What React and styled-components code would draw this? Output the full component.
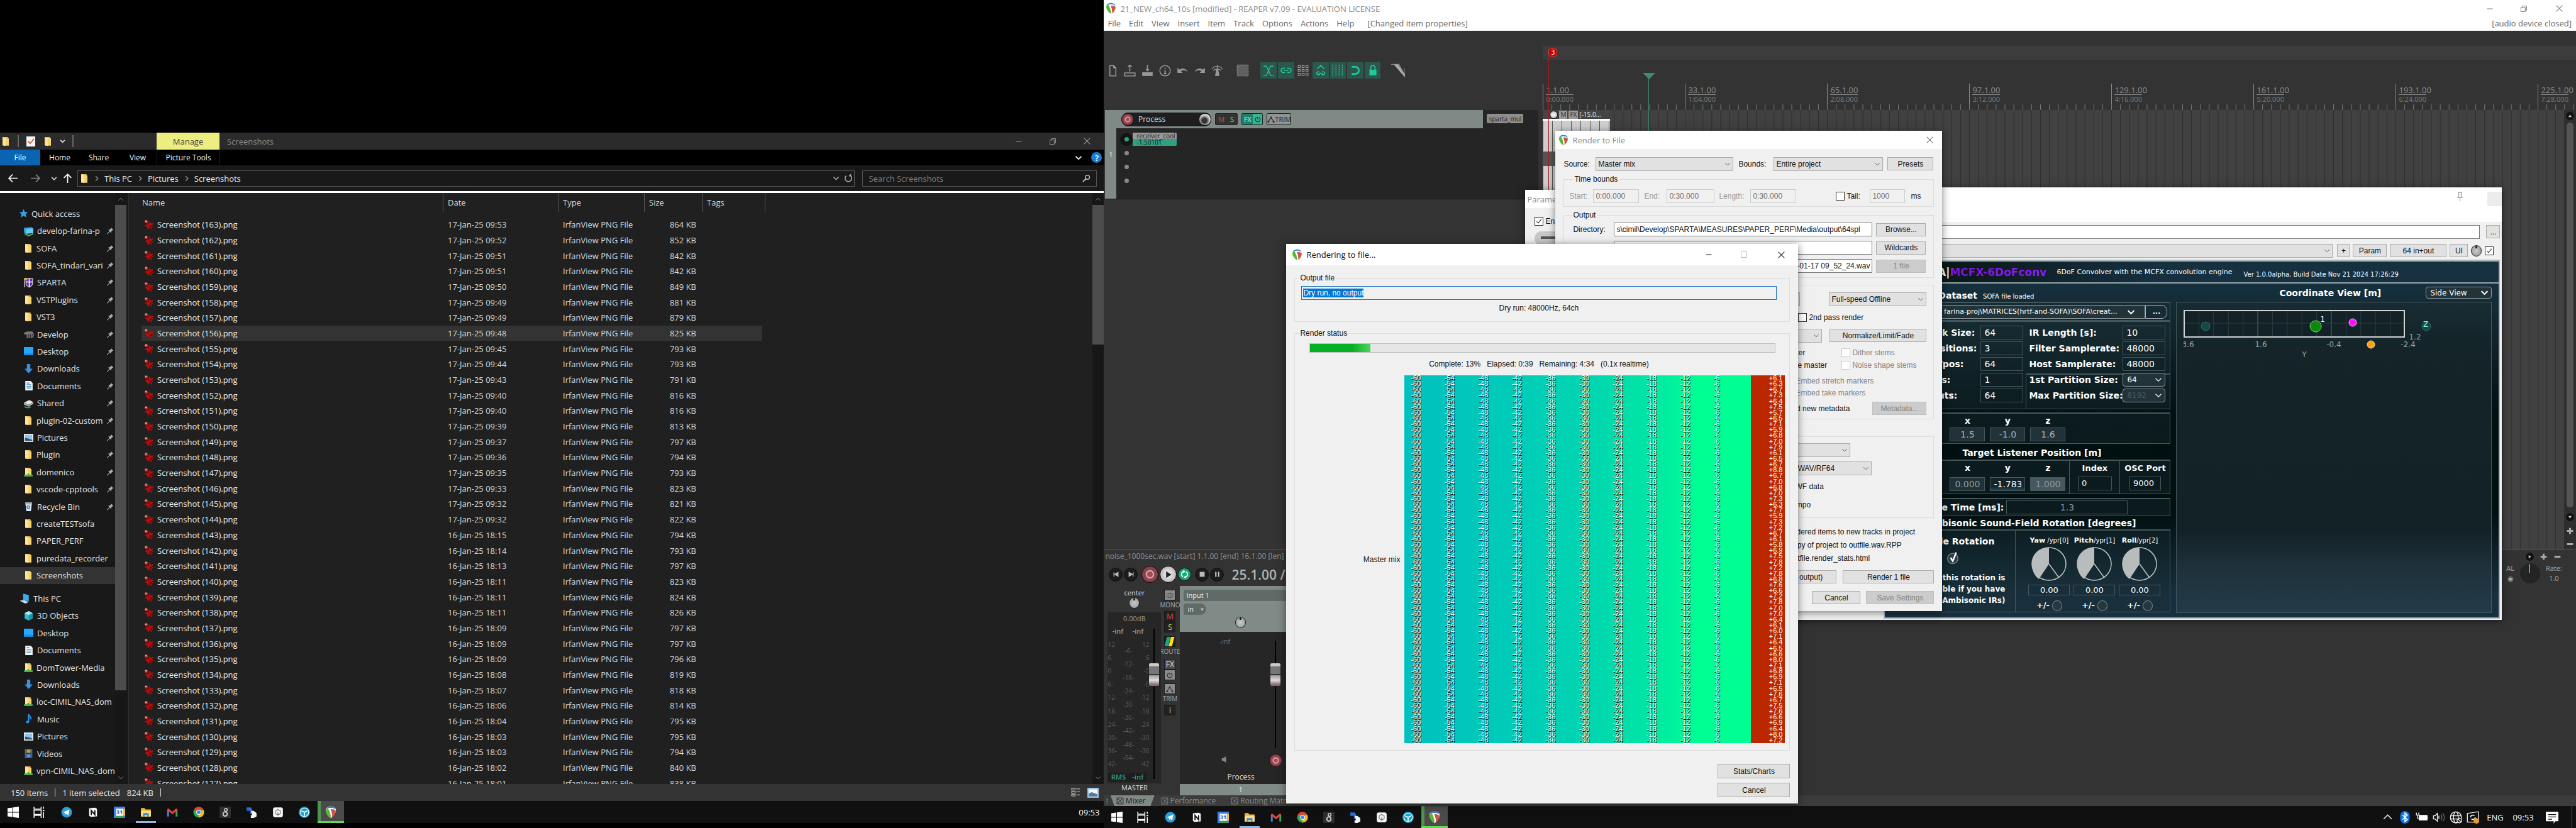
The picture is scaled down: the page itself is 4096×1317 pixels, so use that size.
import React, { useEffect, useRef } from "react";
import styled, { createGlobalStyle, css } from "styled-components";

const UI = '"Open Sans", "Noto Sans", sans-serif';
const MS = '"Liberation Sans", Arial, sans-serif';
const VD = '"DejaVu Sans", Verdana, sans-serif';

const Global = createGlobalStyle`
  *, *::before, *::after { box-sizing: border-box; }
  body { margin: 0; background: #000; font: 13px/16px ${UI}; color: #e6e6e6; overflow: hidden; }
  button, input, select { font: inherit; color: inherit; margin: 0; padding: 0; border: 0; background: none; border-radius: 0; outline: none; }
  fieldset { min-width: 0; margin: 0; }
  svg { display: block; flex: none; }
`;

const Screen = styled.div`
  display: grid; grid-template-columns: 3fr 4fr; grid-template-rows: minmax(0, 1fr); height: 100vh; white-space: nowrap;
`;

/* ───────────── icons ───────────── */
const Svg = ({ s = 17, w, h, vb = "0 0 16 16", children, ...p }) => (
  <svg width={w || s} height={h || s} viewBox={vb} fill="none" aria-hidden="true" {...p}>{children}</svg>
);
const ReaperLogo = ({ s = 18 }) => (
  <Svg s={s}>
    <path d="M8 .5c3 0 6.500 1.500 6.500 4.500 0 4-3 8-6.500 10.500C4.500 13 1.500 9 1.500 5 1.500 2 5 .5 8 .5z" fill="#fff" />
    <path d="M2 4.500C2.400 2 5 .7 8 .7s5.600 1.300 6 3.800C12 2.800 10 2.400 8 2.400S4 2.800 2 4.500z" fill="#2e86c4" />
    <path d="M1.600 5c.8-.9 1.900-1.600 3-1.900 1.800 3 3.400 7 3.600 12.300C4.600 13.100 1.500 9 1.600 5z" fill="#58b82e" />
    <path d="M7 4.200c2.200-.6 5-.1 7.300 1.600-.1 3.500-2.300 6.800-4.800 9C9.700 10.600 9 7 7 4.200z" fill="#cf5450" />
    <path d="M5 3.300c2-.6 3.500-.5 5 .2-1.200.1-1.900.4-2.400.9 1.600 3.200 2 6 1.800 10-.6-4.600-2-8-4.400-11.100z" fill="#fff" />
  </Svg>
);
const Folder = ({ s = 16, badge }) => (
  <Svg s={s}>
    <path d="M3 1h8.500v2H13v11.500H3z" fill="#e9bd52" /><path d="M3 1.300 8 2.500v12.800l-5-1.200z" fill="#fbe39a" />
    <path d="M8 3h5v11.500H8z" fill="#f5d272" />
    {badge && <path d="M1 13.500h14M8 10v4" stroke="#3bb143" strokeWidth="2.500" />}
  </Svg>
);
const Net = () => (<Svg><path d="M1 3l11-1 3 2v7l-11 1-3-2z" fill="#2d9fe0" /><path d="M4 5l11-1v7l-11 1z" fill="#6cc6f2" /><path d="M2 12l6 3 7-3" stroke="#4bb04f" strokeWidth="2" /></Svg>);
const Shield = () => (<Svg><path d="M4 2h10v7c0 3-3 5-5 6-2-1-5-3-5-6z" fill="#5a2db4" stroke="#ddd" /><path d="M9 2v12M4 7h10" stroke="#fff" strokeWidth="1.500" /><path d="M1 1h5v3H1z" fill="#d8b13a" /><path d="M2 4v11" stroke="#999" strokeWidth="2" /></Svg>);
const Horse = () => (<Svg><path d="M1 7l5-2h7l2 3-1 5M6 8v6M9 8v6M12 8v6M2 8l3-1h8" stroke="#7d7d7d" strokeWidth="1.800" /></Svg>);
const Desk = () => (<Svg><path d="M1 2h14v12H1z" fill="#1b8ee6" /><path d="M1 2h14v9H1z" fill="#27a8ff" /></Svg>);
const Down = () => (<Svg><path d="M5.500 1h5v7H14l-6 7-6-7h3.500z" fill="#3a92de" /></Svg>);
const Doc = () => (<Svg><path d="M3 1h8l3 3v11H3z" fill="#f3f6f8" /><path d="M5 4h4M5 6.500h7M5 9h7M5 11.500h7" stroke="#4a90c8" strokeWidth="1.200" /></Svg>);
const Share = () => (<Svg><path d="M1 7l8-4 6 3-7 4z" fill="#e6e6e6" /><path d="M1 7l7 3v3l-7-3zM8 10l7-4v3l-7 4z" fill="#a6a6a6" /><path d="M2 13c3 2 6 2 9 0" stroke="#47a24b" strokeWidth="2" /></Svg>);
const Pic = () => (<Svg><path d="M1 2h14v12H1z" fill="#f5f5f5" /><path d="M2.500 3.500h11v9h-11z" fill="#8ec6ee" /><path d="M2.500 8l5 1 6 2v1.500h-11z" fill="#33546e" /></Svg>);
const Bin = () => (<Svg><path d="M3 2h10l-1.500 13h-7z" fill="#dfe7ec" /><path d="M3 2h10l-.4 3H3.400z" fill="#9fb3c0" /><circle cx="7.500" cy="9" r="2" stroke="#2f86d4" strokeWidth="1.500" /></Svg>);
const Pc = () => (<Svg s={18}><path d="M6 1l8 2v9l-8-2z" fill="#3fa9ea" /><path d="M1 11l6-1 7 3-5 2z" fill="#cfd8de" /></Svg>);
const Cube = () => (<Svg><path d="M8 1l6 3v8l-6 3-6-3V4z" fill="#35bcd0" /><path d="M8 1l6 3-6 3-6-3z" fill="#a7ecf3" /><path d="M8 7l6-3v8l-6 3z" fill="#1a97ac" /></Svg>);
const Note = () => (<Svg><path d="M8 1v10.500" stroke="#1f9bf0" strokeWidth="2" /><path d="M8 1c.5 3 4 3.500 3.500 7.500" stroke="#1f9bf0" strokeWidth="1.800" /><ellipse cx="6.500" cy="12.500" rx="2.500" ry="2" fill="#1f9bf0" /></Svg>);
const Film = () => (<Svg><path d="M2 1h12v14H2z" fill="#2b3b55" /><path d="M5 2h6v5H5z" fill="#a7a44c" /><path d="M5 9h6v5H5z" fill="#5e8fd8" /><path d="M3.500 1v14M12.500 1v14" stroke="#9aa" strokeDasharray="1 1" /></Svg>);
const Star = () => (<Svg s={15}><path d="M8 .5l2.100 5 5.400.4-4.100 3.500 1.300 5.300L8 11.900l-4.700 2.800 1.300-5.300L.5 5.900l5.400-.4z" fill="#2ea3ee" /></Svg>);
const Pin = () => (<Svg s={12}><path d="M10 1l5 5-1.500.5-3 3-.3 3.200-2.700-2.600L2 15.500l-.8-.8L6.700 9 4 6l3.300-.3 3-3z" fill="#a9b0b5" /></Svg>);
const Splat = () => (
  <Svg s={17}>
    <path d="M9 2l1.500 3.500L15 5l-2 3.500L15.500 10l-3.300 1 .3 4-3.500-2.500L6.500 15l-.8-4L2 9.500 5 7 4 3l3.500 1.500z" fill="#b80c0c" />
    <path d="M9 2l-1 6-3-1zM9 13l1-5 4 2z" fill="#7a0606" /><circle cx="4.200" cy="3.200" r="2.400" fill="#a33" /><circle cx="3.800" cy="2.800" r="1.100" fill="#e8b8b8" />
  </Svg>
);
const Chev = ({ s = 10, d = "down", c = "currentColor", sw = 1.5 }) => {
  const p = { down: "M2 5l6 6 6-6", up: "M2 11l6-6 6 6", right: "M5 2l6 6-6 6" }[d];
  return <Svg s={s}><path d={p} stroke={c} strokeWidth={sw} /></Svg>;
};
const Arrow = ({ r = 0, c = "#fff" }) => (<Svg s={17}><path transform={`rotate(${r} 8 8)`} d="M15 8H2M7.500 2.500 2 8l5.500 5.500" stroke={c} strokeWidth="1.600" /></Svg>);
const MinI = ({ c }) => <Svg s={12}><path d="M2 8h12" stroke={c} strokeWidth="1.300" /></Svg>;
const MaxI = ({ c }) => <Svg s={12}><path d="M2 2h12v12H2z" stroke={c} strokeWidth="1.300" /></Svg>;
const RestI = ({ c }) => <Svg s={12}><path d="M2 5h9v9H2zM5 5V2h9v9h-3" stroke={c} strokeWidth="1.300" /></Svg>;
const XI = ({ c }) => <Svg s={13}><path d="M2 2l12 12M14 2L2 14" stroke={c} strokeWidth="1.300" /></Svg>;

/* ───────────── taskbar ───────────── */
const Bar = styled.nav`
  display: flex; align-items: stretch; height: 35px; background: #101010; flex: none; color: #fff;
`;
const TaskBtn = styled.button`
  display: flex; align-items: center; justify-content: center; width: 42px; padding-bottom: 3px; border-top: 3px solid transparent;
  ${(p) => p.$sys && css`width: 41px;`}
  ${(p) => p.$open && css`background: linear-gradient(#8fb8dc, #8fb8dc) center bottom / 32px 3px no-repeat;`}
  ${(p) => p.$active && css`background: linear-gradient(90deg, #4f944f 5px, #4b4b4b 5px); box-shadow: inset 0 -3px #5fd854; border: 0; padding-bottom: 0;`}
`;
const Gap = styled.span`width: ${(p) => p.$w}px; flex: none;`;
const Fill = styled.span`flex: 1;`;
const taskIcons = [
  ["Start", <Svg s={18}><path d="M0 2.300 7 1.300v6.200H0zM8 1.200 16 0v7.500H8zM0 8.500h7v6.200l-7-1zM8 8.500h8V16l-8-1.200z" fill="#fff" /></Svg>],
  ["Task view", <Svg s={18}><path d="M1 0v3.500h10V0M1 16v-3.500h10V16M1 5h10v6H1zM14.500 0v3M14.500 8v8" stroke="#fff" strokeWidth="1.300" /><path d="M13.500 4.500h2v2h-2z" fill="#fff" /></Svg>],
  ["Telegram", <Svg s={18}><circle cx="8" cy="8" r="7.500" fill="#2a9fd8" /><path d="M3 8l9-4-1.500 8.500L7.500 10 6.500 12l-.5-3z" fill="#fff" /></Svg>],
  ["Notion", <Svg s={18}><path d="M2 2l9-1 3 2v11l-9 1-3-2z" fill="#fff" stroke="#222" /><path d="M5.500 12V5.500l5 6V5" stroke="#111" strokeWidth="1.700" /></Svg>],
  ["Calendar", <Svg s={18}><path d="M0 0h16v16H0z" fill="#3f7de8" /><path d="M13 3h3v10h-3z" fill="#f9bc15" /><path d="M3 13h10v3H3z" fill="#32a350" /><path d="M3 3h10v10H3z" fill="#fff" /><text x="8" y="10.800" fontSize="8" fontWeight="700" textAnchor="middle" fill="#2a66d0">31</text></Svg>],
  ["File Explorer", <Svg s={18}><path d="M1 2h5l1.500 2H15v10H1z" fill="#f0b93a" /><path d="M1 6h14v8H1z" fill="#ffdd80" /><path d="M4 9h8v5h-2v-2H6v2H4z" fill="#3a8bd4" /></Svg>],
  ["Gmail", <Svg s={18}><path d="M2 14V4" stroke="#4285f4" strokeWidth="2.600" /><path d="M14 14V4" stroke="#34a853" strokeWidth="2.600" /><path d="M1.500 3.500 8 9l6.500-5.500" stroke="#ea4335" strokeWidth="2.800" /></Svg>],
  ["Chrome", <Svg s={18}><circle cx="8" cy="8" r="7.500" fill="#33a852" /><path d="M8 8 1.500 4.200A7.500 7.500 0 0 1 14.500 4.300H8z" fill="#ea4335" /><path d="M8 8l6.500-3.700A7.500 7.500 0 0 1 8 15.500z" fill="#fbbc05" /><circle cx="8" cy="8" r="3.500" fill="#fff" /><circle cx="8" cy="8" r="2.700" fill="#4285f4" /></Svg>],
  ["Music notes", <Svg s={18}><path d="M0 0h16v16H0z" fill="#2e2e2e" /><circle cx="8" cy="10.500" r="3" stroke="#d8d8d8" strokeWidth="1.600" /><circle cx="9" cy="4.500" r="2" stroke="#d8d8d8" strokeWidth="1.300" /></Svg>],
  ["Sync", <Svg s={18}><path d="M1 1h6l2 3v6H6V6H1z" fill="#2b6bd8" /><path d="M7 6h4l4 3v5l-4 2H7V12h2z" fill="#f2f6fb" /></Svg>],
  ["Model", <Svg s={18}><rect x="1" y="1" width="14" height="14" rx="3" fill="#f4f4f4" /><path d="M8 4l3.500 2v4L8 12l-3.500-2V6zM8 8v4" stroke="#777" /></Svg>],
  ["Chat", <Svg s={18}><circle cx="8" cy="8" r="8" fill="#1ba0c8" /><circle cx="8" cy="8" r="6" stroke="#fff" /><path d="M8 8 4 6M8 8l4-2M8 8v5" stroke="#fff" strokeWidth="1.500" /></Svg>],
  ["REAPER", <ReaperLogo s={20} />],
];
const TaskButtons = () => taskIcons.map(([n, ic], i) => (
  <React.Fragment key={n}>
    <TaskBtn aria-label={n} $sys={i < 2} $open={n === "File Explorer"} $active={n === "REAPER"}>{ic}</TaskBtn>
    {i === 1 && <Gap $w={3} />}
  </React.Fragment>
));
const Tray = styled.div`
  display: grid; grid-template-columns: repeat(6, 27px) 45px 44px 48px 14px; align-items: center; justify-items: center;
`;
const DeskEdge = styled.span`width: 1px; height: 35px; background: #555;`;
const Clock = styled.time`align-self: center; margin-right: 7px;`;

/* ───────────── explorer ───────────── */
const LeftMonitor = styled.div`display: flex; flex-direction: column; min-width: 0; padding: 211px 0 8px; background: #000;`;
const Explorer = styled.section`flex: 1; min-height: 0; display: flex; flex-direction: column; background: #202020;`;
const ETitle = styled.header`display: flex; align-items: center; height: 27px; background: #2b2b2b; color: #8c8c8c; flex: none;`;
const Quick = styled.div`display: flex; align-items: center; gap: 11px; width: 249px; padding-left: 1px; color: #ddd;`;
const Tick = styled.i`width: 2px; height: 19px; border: solid #666; border-width: 0 1px; `;
const Manage = styled.button`width: 100px; height: 27px; background: #eded80; color: #444; margin-right: 12px;`;
const WinBtn = styled.button`display: grid; place-items: center; width: ${(p) => p.$w || 54}px; height: 100%;`;
const Ribbon = styled.div`display: flex; align-items: center; height: 25px; background: #000; color: #eee; flex: none; padding-right: 3px;`;
const Tab = styled.button`
  height: 25px; width: ${(p) => p.$w || 62}px; font-size: 12px; text-align: center;
  ${(p) => p.$file && css`background: #0a63b3; color: #fff;`}
  ${(p) => p.$edge && css`border: solid #222; border-width: 0 1px; margin-left: -1px;`}
`;
const Help = styled.button`width: 17px; height: 17px; border-radius: 50%; background: #1580d8; color: #fff; font-weight: 600; line-height: 16px; margin-left: 14px;`;
const AddressRow = styled.div`
  display: flex; align-items: center; height: 44px; background: #191919; border-bottom: 3px solid #fff; padding: 0 11px 0 12px; flex: none;
`;
const NavBtns = styled.div`display: grid; grid-template-columns: 36px 33px 18px 24px; align-items: center; `;
const NavBtn = styled.button`display: flex; padding: 0;`;
const Crumbs = styled.div`
  flex: 1; display: flex; align-items: center; gap: 7px; height: 26px; border: 1px solid #535353; padding: 0 2px; margin-right: 12px;
`;
const Crumb = styled.a`color: #eee; text-decoration: none; margin-right: 1px;`;
const Search = styled.label`
  display: flex; align-items: center; width: 373px; height: 26px; border: 1px solid #535353; padding: 0 9px; color: #ccc;
  input { flex: 1; } input::placeholder { color: #7d7d7d; }
`;
const EBody = styled.div`flex: 1; min-height: 0; display: flex;`;
const Side = styled.aside`width: 183px; background: #191919; padding-top: 19px; overflow: hidden; flex: none;`;
const SideList = styled.ul`
  display: grid; grid-auto-rows: 1fr; height: ${(p) => p.$h}px; margin: 0 0 9px; padding: 0; list-style: none;
`;
const SideItem = styled.li`
  display: flex; align-items: center; gap: 5px; padding-left: ${(p) => (p.$top ? 30 : 37)}px; padding-right: 5px; margin-right: 2px;
  ${(p) => p.$on && css`background: #333;`}
  span { flex: 1; overflow: hidden; }
`;
const VScroll = styled.div`
  width: ${(p) => p.$w}px; flex: none; display: flex; flex-direction: column; align-items: center; justify-content: space-between; background: #171717; color: #888; padding: 5px 0;
`;
const VThumb = styled.span`width: 100%; height: ${(p) => p.$h}px; background: #4d4d4d; margin: 4px 0 auto;`;
const List = styled.div`flex: 1; min-width: 0; overflow: hidden; border-left: 3px solid #191919; box-shadow: inset 1px 0 #333; padding-left: 21px;`;
const Files = styled.table`
  display: block; width: 993px; border-spacing: 0;
  thead { display: block; }
  tr { display: grid; grid-template-columns: 480px 183px 137px 92px 100px; align-items: center; }
  thead tr { height: 30px; }
  th { font-weight: 400; text-align: left; padding: 0 0 0 7px; height: 30px; line-height: 30px; border-right: 1px solid #5c5c5c; color: #d8d8d8; }
  th:first-child { padding-left: 1px; }
  tbody { display: grid; grid-auto-rows: 1fr; height: 913px; margin-top: 8px; }
  td { padding: 0 0 0 7px; color: #dadada; }
  td:first-child { padding-left: 3px; color: #ececec; }
  td:nth-child(4) { text-align: right; padding-right: 10px; }
`;
const FileRow = styled.tr`
  width: 987px;
  ${(p) => p.$on && css`background: #333;`}
`;
const FileName = styled.div`display: flex; align-items: center; gap: 5px;`;
const Status = styled.footer`display: flex; align-items: center; gap: 11px; height: 27px; background: #333; padding: 0 8px 0 17px; flex: none;`;
const Sep = styled.i`width: 1px; height: 13px; background: #ddd;`;

const dates = ["17-Jan-25 09:53", "17-Jan-25 09:52", "17-Jan-25 09:51", "17-Jan-25 09:51", "17-Jan-25 09:50", "17-Jan-25 09:49", "17-Jan-25 09:49", "17-Jan-25 09:48", "17-Jan-25 09:45", "17-Jan-25 09:44", "17-Jan-25 09:43", "17-Jan-25 09:40", "17-Jan-25 09:40", "17-Jan-25 09:39", "17-Jan-25 09:37", "17-Jan-25 09:36", "17-Jan-25 09:35", "17-Jan-25 09:33", "17-Jan-25 09:32", "17-Jan-25 09:32", "16-Jan-25 18:15", "16-Jan-25 18:14", "16-Jan-25 18:13", "16-Jan-25 18:11", "16-Jan-25 18:11", "16-Jan-25 18:11", "16-Jan-25 18:09", "16-Jan-25 18:09", "16-Jan-25 18:09", "16-Jan-25 18:08", "16-Jan-25 18:07", "16-Jan-25 18:06", "16-Jan-25 18:04", "16-Jan-25 18:03", "16-Jan-25 18:03", "16-Jan-25 18:02", "16-Jan-25 18:01"];
const sizes = [864, 852, 842, 842, 849, 881, 879, 825, 793, 793, 791, 816, 816, 813, 797, 794, 793, 823, 821, 822, 794, 793, 797, 823, 824, 826, 797, 797, 796, 819, 818, 814, 795, 795, 794, 840, 838];
const F = <Folder />;
const quick = [["develop-farina-p", <Net />, 1], ["SOFA", F, 1], ["SOFA_tindari_vari", F, 1], ["SPARTA", <Shield />, 1], ["VSTPlugins", F, 1], ["VST3", F, 1], ["Develop", <Horse />, 1], ["Desktop", <Desk />, 1], ["Downloads", <Down />, 1], ["Documents", <Doc />, 1], ["Shared", <Share />, 1], ["plugin-02-custom", F, 1], ["Pictures", <Pic />, 1], ["Plugin", F, 1], ["domenico", <Folder badge />, 1], ["vscode-cpptools", F, 1], ["Recycle Bin", <Bin />, 1], ["createTESTsofa", F], ["PAPER_PERF", F], ["puredata_recorder", F], ["Screenshots", F]];
const pc = [["3D Objects", <Cube />], ["Desktop", <Desk />], ["Documents", <Doc />], ["DomTower-Media", <Folder badge />], ["Downloads", <Down />], ["loc-CIMIL_NAS_dom", <Folder badge />], ["Music", <Note />], ["Pictures", <Pic />], ["Videos", <Film />], ["vpn-CIMIL_NAS_dom", <Folder badge />]];

const ExplorerWindow = () => (
  <Explorer>
    <ETitle>
      <Quick>
        <Folder /><Tick />
        <Svg s={16}><path d="M1 0h14v16H1z" fill="#f4f4f4" /><path d="M4 8l3 3 6-7" stroke="#d35a2a" strokeWidth="1.800" /></Svg>
        <Folder /><Chev s={9} sw={3} /><Tick />
      </Quick>
      <Manage>Manage</Manage>Screenshots<Fill />
      <WinBtn aria-label="Minimize"><MinI c="#999" /></WinBtn><WinBtn aria-label="Restore"><RestI c="#999" /></WinBtn><WinBtn aria-label="Close"><XI c="#999" /></WinBtn>
    </ETitle>
    <Ribbon>
      <Tab $file $w={64}>File</Tab><Tab>Home</Tab><Tab>Share</Tab><Tab>View</Tab><Tab $edge $w={101}>Picture Tools</Tab><Fill />
      <Chev s={12} sw={2.5} c="#ddd" /><Help aria-label="Help">?</Help>
    </Ribbon>
    <AddressRow>
      <NavBtns>
        <NavBtn aria-label="Back"><Arrow /></NavBtn><NavBtn aria-label="Forward"><Arrow r={180} c="#888" /></NavBtn>
        <NavBtn aria-label="Recent"><Chev sw={2.5} c="#ddd" /></NavBtn><NavBtn aria-label="Up"><Arrow r={90} /></NavBtn>
      </NavBtns>
      <Crumbs>
        <Folder /><Chev d="right" c="#999" sw={2} /><Crumb href="#pc">This PC</Crumb><Chev d="right" c="#999" sw={2} /><Crumb href="#pictures">Pictures</Crumb><Chev d="right" c="#999" sw={2} /><Crumb href="#screenshots">Screenshots</Crumb>
        <Fill /><Chev s={11} sw={2.5} c="#999" />
        <Svg s={14}><path d="M4 3a6 6 0 1 0 8 0M12 3V0M12 3H9" stroke="#aaa" strokeWidth="1.800" /></Svg>
      </Crumbs>
      <Search><input placeholder="Search Screenshots" aria-label="Search Screenshots" />
        <Svg s={13}><circle cx="10" cy="6" r="4" stroke="#ccc" strokeWidth="1.700" /><path d="M7 9l-6 6" stroke="#ccc" strokeWidth="2" /></Svg>
      </Search>
    </AddressRow>
    <EBody>
      <Side>
        <SideList $h={603}>
          <SideItem $top><Star /><span>Quick access</span></SideItem>
          {quick.map(([n, ic, p]) => <SideItem key={n} $on={n === "Screenshots"}>{ic}<span>{n}</span>{p && <Pin />}</SideItem>)}
        </SideList>
        <SideList $h={302}>
          <SideItem $top><Pc /><span>This PC</span></SideItem>
          {pc.map(([n, ic]) => <SideItem key={n}>{ic}<span>{n}</span></SideItem>)}
        </SideList>
      </Side>
      <VScroll $w={18}><Chev d="up" /><VThumb $h={772} /><Chev /></VScroll>
      <List>
        <Files>
          <thead><tr><th>Name</th><th>Date</th><th>Type</th><th>Size</th><th>Tags</th></tr></thead>
          <tbody>
            {dates.map((d, i) => (
              <FileRow key={i} $on={i === 7}>
                <td><FileName><Splat />Screenshot ({163 - i}).png</FileName></td><td>{d}</td><td>IrfanView PNG File</td><td>{sizes[i]} KB</td><td />
              </FileRow>
            ))}
          </tbody>
        </Files>
      </List>
      <VScroll $w={18}><Chev d="up" /><VThumb $h={222} /><Chev /></VScroll>
    </EBody>
    <Status>
      <span>150 items</span><Sep /><span>1 item selected</span><span>824 KB</span><Sep /><Fill />
      <Svg s={15}><path d="M1 1h6v3H1zM1 6h6v3H1zM1 11h6v3H1zM9 2h6M9 7h6M9 12h6" stroke="#ddd" /></Svg>
      <Svg s={18}><path d="M0 1h16v14H0z" fill="#9cc4e4" /><path d="M2 3h12v10H2z" fill="#f4f7fa" /><path d="M2 9l4-2 8 3v3H2z" fill="#58799a" /></Svg>
    </Status>
  </Explorer>
);

/* ───────────── DAW main window ───────────── */
const RightMonitor = styled.div`position: relative; display: flex; flex-direction: column; min-width: 0; overflow: hidden; background: #333;`;
const DawTitle = styled.header`display: flex; align-items: center; height: 27px; background: #fff; color: #8a8a8a; padding-left: 2px; gap: 5px; flex: none;`;
const MenuBar = styled.nav`display: flex; align-items: center; height: 22px; background: #fff; color: #666; flex: none; padding-bottom: 1px; border-bottom: 1px solid #f0f0f0;`;
const MenuBtn = styled.button`padding: 0 7px 0 6px;`;
const MenuNote = styled.span`margin-left: ${(p) => (p.$right ? "auto" : "14px")}; margin-right: 7px;`;
const Main = styled.div`flex: 1; min-height: 0; display: grid; grid-template-columns: 698px 1fr; grid-template-rows: minmax(0, 1fr);`;
const Toolbar = styled.div`display: flex; align-items: center; height: 126px; padding: 0 1px;`;
const Tools = styled.div`
  display: grid; grid-template-columns: repeat(${(p) => p.$n}, 1fr); gap: 2px; width: ${(p) => p.$w}px; margin-right: ${(p) => p.$mr || 0}px;
`;
const Tool = styled.button`
  display: grid; place-items: center; height: 26px; ${(p) => p.$on && css`background: #2c574d;`}
`;
const Track = styled.section`display: flex; height: 142px; margin: 0 7px 0 2px; background: #252525; border-bottom: 1px solid #161616;`;
const TrackStrip = styled.div`width: 18px; background: #7f8a87; display: grid; place-items: center; font-size: 10px; color: #fff;`;
const TrackBody = styled.div`width: 583px; `;
const TrackHead = styled.div`display: flex; align-items: center; height: 29px; background: #7f8a87; padding-left: 8px; gap: 6px;`;
const NameBox = styled.div`display: flex; align-items: center; justify-content: space-between; width: 143px; height: 22px; border-radius: 11px 10px 10px 11px; background: #1e1e1e; input { width: 90px; font-size: 12px; color: #ddd; }`;
const Disc = styled.button`
  display: grid; place-items: center; width: ${(p) => p.$s}px; height: ${(p) => p.$s}px; border-radius: 50%; background: ${(p) => p.$bg}; border: 1px solid #111; flex: none; color: ${(p) => p.$c || "#ccc"};
`;
const Pair = styled.div`display: flex; border: 1px solid #222; border-radius: 2px; overflow: hidden; height: 19px;`;
const Mini = styled.button`
  width: ${(p) => p.$w || 17}px; background: ${(p) => p.$bg || "#333"}; color: ${(p) => p.$c || "#ddd"}; font-size: 11px; line-height: 17px; display: grid; place-items: center; grid-auto-flow: column;
`;
const FxTag = styled.button`align-self: flex-start; height: 15px; width: 58px; margin: 6px 0 0 6px; background: #8d8d8d; border-radius: 2px; color: #1e1e1e; font-size: 10px; line-height: 14px;`;
const Sends = styled.div`display: grid; grid-template-columns: 20px 70px; padding: 7px 0 0 6px; row-gap: 3px; align-items: center; justify-items: center;`;
const Param = styled.div`width: 70px; height: 21px; border-radius: 0 2px 2px 0; background: linear-gradient(#999 10px, #2fa084 10px); color: #161616; font-size: 10px; line-height: 10px; overflow: hidden; padding-left: 6px;`;
const Dot = styled.i`width: 7px; height: 7px; border-radius: 50%; background: ${(p) => p.$c || "#888"}; margin: ${(p) => (p.$c ? "0" : "5px 0 7px")};`;

const Arrange = styled.div`position: relative; display: flex; flex-direction: column; min-width: 0; overflow: hidden;`;
const MarkerBand = styled.div`height: 22px; margin: 24px 0 38px; background: #3c3c3c; flex: none; padding: 3px 0 0 9px;`;
const Marker = styled.button`display: block; width: 14px; height: 15px; border-radius: 5px; background: #b40808; border: 1px solid #e04040; color: #fff; font-size: 10px; line-height: 13px;`;
const Ruler = styled.div`position: relative; height: 42px; display: flex; color: #8c8c8c; flex: none; overflow: hidden;`;
const RulerCell = styled.div`
  width: 226px; flex: none; border-left: 1px solid #888; padding: 3px 0 0 4px; line-height: 14px;
  b { font-weight: 400; display: block; } small { display: block; font-size: 11px; line-height: 13px; color: #7c7c7c; width: 44px; border-top: 1px solid #8c8c8c; }
`;
const Over = styled.svg`position: absolute; inset: 0; width: 100%; height: 100%;`;
const LaneWrap = styled.div`flex: 1; min-height: 0; display: flex;`;
const Lanes = styled.div`position: relative; flex: 1; background: #414141; overflow: hidden;`;
const Item = styled.div`position: relative; width: 107px; height: 142px; display: flex; flex-direction: column;`;
const ItemHead = styled.div`display: flex; align-items: center; gap: 2px; height: 14px; padding-left: 11px; background: #454545; font-size: 10px; color: #eee; overflow: hidden; b { background: #999; color: #333; font-weight: 400; padding: 0 2px; line-height: 13px; }`;
const ItemBody = styled.div`flex: 1; border: solid #fff; border-width: 3px 0 0; background: repeating-linear-gradient(90deg, #555 0 1px, #cfcfcf 1px 15px); display: flex; align-items: center; &::before { content: ""; width: 100%; height: 23px; background: #555; margin-top: -4px; }`;
const PlayLine = styled.i`position: absolute; width: 1px; left: ${(p) => p.$x}px; top: ${(p) => p.$y}px; bottom: 0; background: ${(p) => p.$c};`;
const PlayHead = styled.i`position: absolute; left: 159px; top: 67px; border: 10px solid transparent; border-top-color: #3c8c7a; border-bottom: 0;`;
const Zoomer = styled.div`width: 19px; background: #2e2e2e; display: flex; flex-direction: column; align-items: center; gap: 9px; padding: 3px 0; flex: none;`;
const ZoomThumb = styled.i`flex: 1; width: 11px; border-radius: 5px; background: #555; margin-top: -5px;`;
const Round = styled.button`display: grid; place-items: center; width: 13px; height: 13px; border-radius: 50%; background: #111; color: #ccc;`;
const ZoomBtn = styled.button`display: grid; place-items: center; width: 12px; height: 12px;`;

const Dock = styled.div`display: flex; justify-content: space-between; height: 391px; border-top: 1px solid #555; flex: none;`;
const DockLeft = styled.div`width: 600px; display: flex; flex-direction: column;`;
const InfoLine = styled.div`height: 20px; line-height: 20px; padding-left: 2px; font-size: 12px; color: #8f8f8f;`;
const Transport = styled.div`display: flex; align-items: center; height: 37px; padding-left: 8px; gap: 2px;`;
const TransGap = styled.i`width: ${(p) => p.$w}px;`;
const BigTime = styled.output`font-size: 21px; font-weight: 600; color: #b4b4b4; margin-left: 10px;`;
const Mixer = styled.div`display: flex; flex: 1; min-height: 0;`;
const Master = styled.div`display: flex; flex-direction: column; align-items: center; width: 91px; font-size: 11px; color: #ddd; padding: 4px 0 0 6px; line-height: 14px;`;
const MeterBox = styled.div`
  position: relative; width: 85px; height: 272px; margin-top: 6px; background: #262626; display: grid; grid-template-rows: 20px 20px 212px 20px; color: #999; justify-items: start;
`;
const Scales = styled.div`display: grid; grid-template-columns: 24px 16px 26px; width: 66px; color: #5c5c5c; font-size: 10px;`;
const Scale = styled.div`
  display: grid; grid-auto-rows: 1fr; align-items: center; text-align: ${(p) => p.$a || "left"}; height: ${(p) => (p.$in ? 191 : 212)}px; align-self: center;
`;
const Fader = styled.input`
  appearance: none; writing-mode: vertical-lr; direction: rtl; width: 18px; height: ${(p) => p.$h}px; background: linear-gradient(#000, #000) center / 2px 100% no-repeat;
  &::-webkit-slider-thumb { appearance: none; width: 18px; height: 38px; border-radius: 3px; border: 1px solid #222; background: linear-gradient(#ccc 0 12%, #777 14% 47%, #222 49% 51%, #999 53%, #ddd 75%, #8a6a6e 95%); }
`;
const FaderSlot = styled.div`position: absolute; right: ${(p) => p.$r}px; top: ${(p) => p.$t}px;`;
const Db = styled.div`justify-self: center; align-self: center;`;
const Infs = styled.div`display: flex; justify-content: space-around; width: 64px; font-weight: 600; align-items: center;`;
const Rms = styled.div`display: flex; justify-content: space-around; width: 62px; background: #1d1d1d; color: #2fa084; font-weight: 600; height: 14px; align-self: center;`;
const Knob = styled.i`
  width: 17px; height: 18px; border-radius: 50%; background: radial-gradient(circle at 50% 15%, #222 0 2px, transparent 2px), radial-gradient(#c8cccb, #8f9593); border: 1px solid #222; display: block; flex: none;
`;
const Strip = styled.div`display: flex; flex-direction: column; align-items: center; width: 28px; padding-top: 6px; font-size: 10px; line-height: 14px; color: #aaa;`;
const StripBtn = styled.button`
  display: grid; place-items: center; width: 18px; height: 17px; background: ${(p) => p.$bg || "#222"}; color: ${(p) => p.$c || "#ddd"}; font-size: 12px; border: 1px solid #1a1a1a; margin-top: ${(p) => p.$mt || 0}px; flex: none;
`;
const InputTrack = styled.div`flex: 1; margin-left: 2px; display: flex; flex-direction: column;`;
const InHead = styled.div`height: 73px; background: #808a87; padding: 6px 6px 0; color: #eee; font-size: 11px;`;
const InName = styled.div`height: 18px; line-height: 18px; background: #606a67; padding-left: 4px; border-radius: 3px;`;
const InPill = styled.button`display: flex; align-items: center; justify-content: space-between; width: 36px; height: 18px; border-radius: 3px 9px 9px 3px; background: #606a67; margin-top: 4px; padding: 0 3px 0 6px;`;
const InKnob = styled.div`padding-left: 82px; margin-top: 3px;`;
const InBody = styled.div`position: relative; flex: 1; background: #262626; width: 168px;`;
const InFloat = styled.span`position: absolute; left: ${(p) => p.$x}px; top: ${(p) => p.$y}px; font-size: ${(p) => p.$f || 11}px; color: ${(p) => p.$c || "#777"};`;
const InFoot = styled.div`height: 18px; background: #808a87; color: #eee; font-size: 11px; line-height: 18px; padding-left: 93px;`;
const DockRight = styled.div`display: grid; grid-template-columns: 23px 20px 24px; align-content: start; justify-items: center; padding: 4px 18px 0 0; align-items: center;`;
const RateBox = styled.div`grid-column: 1 / 4; display: flex; align-items: center; gap: 9px; margin: 4px 0 0 -30px; font-size: 11px; color: #aaa; text-align: center;`;
const DarkKnob = styled.i`width: 32px; height: 32px; border-radius: 50%; background: linear-gradient(#ddd, #ddd) center 1px / 1px 14px no-repeat #242424;`;
const Tabs = styled.div`display: flex; align-items: center; height: 17px; background: #3c3c3c; color: #8a8a8a; flex: none; padding-left: 3px; gap: 4px;`;
const DockTab = styled.button`
  display: flex; align-items: center; gap: 3px; height: 17px; padding: 0 14px 0 6px; font-size: 12px;
  ${(p) => p.$on && css`background: #7f8a87; color: #222; clip-path: polygon(0 0, 100% 0, calc(100% - 6px) 100%, 6px 100%); padding-left: 9px; `}
`;

const g = "#22c69c";
const toolsA = [
  ["New project", <path d="M4 1h5l3 3v11H4zM9 1v3h3" stroke="#999" strokeWidth="1.300" />],
  ["Open project", <path d="M1 11h14v4H1zM8 9V0M5.500 3 8 0l2.500 3" stroke="#999" strokeWidth="1.300" />],
  ["Save project", <><path d="M1 10h14v5H1z" fill="#999" /><path d="M8 0v8M6 6l2 2 2-2" stroke="#999" strokeWidth="1.300" /></>],
  ["Project settings", <><circle cx="8" cy="8" r="7" stroke="#999" strokeWidth="1.200" /><path d="M8 7v5M6.500 12h3M8 4v1.500" stroke="#999" strokeWidth="1.500" /></>],
  ["Undo", <path d="M1 4v7h7L5.500 8.500C9 6.500 12 7.500 15 10 13 5 8 3.500 3.500 6.500z" fill="#999" />],
  ["Redo", <path d="M15 4v7H8l2.500-2.500C7 6.500 4 7.500 1 10 3 5 8 3.500 12.500 6.500z" fill="#999" />],
  ["Metronome", <><path d="M5 15h6l-2-10H7z" fill="#999" /><path d="M1 6c2-5 12-5 14 0M3 8c1-3 9-3 10 0M8 0v5" stroke="#999" /></>],
];
const toolsB = [
  ["Crossfade", 1, <path d="M1 2h4l6 13h4M15 2h-4L5 15H1" stroke={g} strokeWidth="1.200" />],
  ["Grouping", 1, <path d="M6.500 5H4a3 3 0 0 0 0 6h2.500M9.500 5H12a3 3 0 0 1 0 6H9.500M4.500 8h7" stroke={g} strokeWidth="1.500" />],
  ["Ripple", 0, <path d="M1 1h3v3H1zM6.500 1h3v3h-3zM12 1h3v3h-3zM1 6.500h3v3H1zM6.500 6.500h3v3h-3zM12 6.500h3v3h-3zM1 12h3v3H1zM6.500 12h3v3h-3zM12 12h3v3h-3z" stroke="#999" />],
  ["Envelopes", 1, <path d="M3 6l5-5 5 5M6 10H4.500a2 2 0 0 0 0 4H7M10 10h1.500a2 2 0 0 1 0 4H9M5.500 12h5" stroke={g} strokeWidth="1.500" />],
  ["Grid", 1, <path d="M1 0v16M5.500 0v16M10 0v16M14.500 0v16" stroke={g} strokeDasharray="2 1" />],
  ["Snap", 1, <path d="M3 3h5a5 5 0 0 1 0 10H3" stroke={g} strokeWidth="2.500" />],
  ["Lock", 1, <><path d="M3 7h10v8H3z" fill={g} /><path d="M5 7V4a3 3 0 0 1 6 0v3" stroke={g} strokeWidth="1.500" /></>],
];
const marks = [["1.1.00", "0:00.000"], ["33.1.00", "1:04.000"], ["65.1.00", "2:08.000"], ["97.1.00", "3:12.000"], ["129.1.00", "4:16.000"], ["161.1.00", "5:20.000"], ["193.1.00", "6:24.000"], ["225.1.00", "7:28.000"]];
const Plus = () => <Svg s={11}><path d="M8 1v14M1 8h14" stroke="#aaa" strokeWidth="4.500" /></Svg>;
const Minus = () => <Svg s={11}><path d="M1 8h14" stroke="#aaa" strokeWidth="4.500" /></Svg>;
const Tri = ({ r = 0 }) => <Svg s={7}><path transform={`rotate(${r} 8 8)`} d="M2 4h12L8 13z" fill="#ccc" /></Svg>;
const BoxX = () => <Svg s={12}><path d="M1.500 1.500h13v13h-13zM4 4l8 8M12 4l-8 8" stroke="currentColor" strokeWidth="1.300" /></Svg>;
const Power = ({ c = "currentColor" }) => <Svg s={10}><path d="M5 3a6 6 0 1 0 6 0M8 1v7" stroke={c} strokeWidth="2" /></Svg>;
const Env = () => <Svg s={12}><path d="M2 13l6-9 6 9" stroke="currentColor" strokeWidth="1.500" /><circle cx="8" cy="4" r="2" fill="currentColor" /><circle cx="2.500" cy="12.500" r="2" fill="currentColor" /><circle cx="13.500" cy="12.500" r="2" fill="currentColor" /></Svg>;

const recBg = "radial-gradient(#a5505a, #7c3640)";
const DawWindow = () => (
  <>
    <DawTitle><ReaperLogo s={19} /><span>21_NEW_ch64_10s [modified] - REAPER v7.09 - EVALUATION LICENSE</span><Fill />
      <WinBtn $w={49} aria-label="Minimize"><MinI c="#777" /></WinBtn><WinBtn $w={49} aria-label="Restore"><RestI c="#777" /></WinBtn><WinBtn aria-label="Close"><XI c="#777" /></WinBtn>
    </DawTitle>
    <MenuBar>
      {["File", "Edit", "View", "Insert", "Item", "Track", "Options", "Actions", "Help"].map((m) => <MenuBtn key={m}>{m}</MenuBtn>)}
      <MenuNote>[Changed item properties]</MenuNote><MenuNote $right>[audio device closed]</MenuNote>
    </MenuBar>
    <Main>
      <div>
        <Toolbar>
          <Tools $n={7} $w={192} $mr={14}>{toolsA.map(([n, d]) => <Tool key={n} aria-label={n}><Svg s={19}>{d}</Svg></Tool>)}</Tools>
          <Tools $n={1} $w={27} $mr={15}><Tool aria-label="Select"><Svg s={20}><path d="M1 1h14v14H1z" fill="#606060" stroke="#999" strokeDasharray="1 1" /></Svg></Tool></Tools>
          <Tools $n={7} $w={191} $mr={14}>{toolsB.map(([n, on, d]) => <Tool key={n} $on={on} aria-label={n}><Svg s={18}>{d}</Svg></Tool>)}</Tools>
          <Tools $n={1} $w={27}><Tool aria-label="Edit"><Svg s={22}><path d="M0 1h9l7 13V5" fill="none" stroke="#888" /><path d="M3 1h5l8 12v3z" fill="#aaa" /></Svg></Tool></Tools>
        </Toolbar>
        <Track>
          <TrackStrip>1</TrackStrip>
          <TrackBody>
            <TrackHead>
              <NameBox>
                <Disc $s={20} $bg={recBg} aria-label="Arm"><Svg s={10}><circle cx="8" cy="8" r="6" stroke="#d99" strokeWidth="3" /></Svg></Disc>
                <input defaultValue="Process" aria-label="Track name" />
                <Disc $s={20} $bg="radial-gradient(circle at 45% 60%, #333 25%, #999 45%, #ddd 65%)" aria-label="Volume" />
              </NameBox>
              <Pair><Mini $c="#d0444a">M</Mini><Mini $c="#c8c050">S</Mini></Pair>
              <Pair><Mini $bg="#1f7f68" $c="#9fe">FX</Mini><Mini $w={15} $bg="#35b590" $c="#143" aria-label="Bypass"><Power /></Mini></Pair>
              <Pair><Mini $w={37} $bg="#8f9392" $c="#222"><Env />TRIM</Mini></Pair>
            </TrackHead>
            <Sends>
              <Disc $s={20} $bg="#141414" aria-label="Parameter"><Dot $c="#2fa084" /></Disc>
              <Param>receiver_cool<br />-1.50101</Param>
              <Dot /><i /><Dot /><i /><Dot /><i />
            </Sends>
          </TrackBody>
          <FxTag>sparta_mul</FxTag>
        </Track>
      </div>
      <Arrange>
        <MarkerBand><Marker>3</Marker></MarkerBand>
        <Ruler>
          {marks.map(([a, b]) => <RulerCell key={a}><b>{a}</b><small>{b}</small></RulerCell>)}
          <Over>
            <defs><pattern id="ticks" width={226 / 16} height="42" patternUnits="userSpaceOnUse"><path d="M.5 33v9" stroke="#777" /></pattern></defs>
            <rect width="100%" height="100%" fill="url(#ticks)" />
          </Over>
        </Ruler>
        <LaneWrap>
          <Lanes>
            <Over>
              <defs><pattern id="grid" width={226 / 16} height="40" patternUnits="userSpaceOnUse"><path d="M.5 0v40" stroke="#2d2d2d" /></pattern></defs>
              <rect width="100%" height="100%" fill="url(#grid)" />
            </Over>
            <Item>
              <ItemHead><Disc $s={13} $bg="radial-gradient(#fff, #aaa)" aria-label="Item volume" /><b>M</b><b>FX</b>[-15.0...</ItemHead>
              <ItemBody />
            </Item>
          </Lanes>
          <Zoomer>
            <Round aria-label="Scroll up"><Tri r={180} /></Round><ZoomThumb /><Round aria-label="Scroll down"><Tri /></Round>
            <ZoomBtn aria-label="Zoom in"><Plus /></ZoomBtn><ZoomBtn aria-label="Zoom out"><Minus /></ZoomBtn>
          </Zoomer>
        </LaneWrap>
        <PlayLine $x={9} $y={42} $c="#b01818" />
        <PlayHead /><PlayLine $x={168} $y={76} $c="#3c8c7a" />
      </Arrange>
    </Main>
    <Dock>
      <DockLeft>
        <InfoLine>noise_1000sec.wav [start] 1.1.00 [end] 16.1.00 [len] 15.0</InfoLine>
        <Transport>
          <Disc $s={22} $bg="#1c1c1c" aria-label="To start"><Svg s={9}><path d="M2 2v12M14 2v12L4 8z" fill="#bbb" stroke="#bbb" strokeWidth="2" /></Svg></Disc>
          <Disc $s={22} $bg="#1c1c1c" aria-label="To end"><Svg s={9}><path d="M14 2v12M2 2v12l10-6z" fill="#bbb" stroke="#bbb" strokeWidth="2" /></Svg></Disc>
          <TransGap $w={2} />
          <Disc $s={27} $bg={recBg} aria-label="Record"><Svg s={15}><circle cx="8" cy="8" r="6" stroke="#caa" strokeWidth="2.500" /></Svg></Disc>
          <Disc $s={27} $bg="radial-gradient(#ddd 30%, #a89ca2)" aria-label="Play"><Svg s={12}><path d="M3 1l11 7-11 7z" fill="#222" /></Svg></Disc>
          <Disc $s={21} $bg="#16a878" aria-label="Repeat"><Svg s={13}><path d="M5 13A6 6 0 0 1 7 2M11 3a6 6 0 0 1-2 11M5 1l3 1-2 3M11 15l-3-1 2-3" stroke="#fff" strokeWidth="2" /></Svg></Disc>
          <TransGap $w={2} />
          <Disc $s={22} $bg="#1c1c1c" aria-label="Stop"><Svg s={9}><path d="M1 1h14v14H1z" fill="#bbb" /></Svg></Disc>
          <Disc $s={22} $bg="#1c1c1c" aria-label="Pause"><Svg s={9}><path d="M4 1v14M12 1v14" stroke="#bbb" strokeWidth="4" /></Svg></Disc>
          <BigTime>25.1.00 /</BigTime>
        </Transport>
        <Mixer>
          <Master>
            <span>center</span><Knob />
            <MeterBox>
              <Db>0.00dB</Db><Infs><span>-inf</span><span>-inf</span></Infs>
              <Scales>
                <Scale>{["12", "6", "0", "6-", "12-", "18-", "24-", "30-", "36-", "42-"].map((t) => <span key={t}>{t}</span>)}</Scale>
                <Scale $in $a="center">{[6, 12, 18, 24, 30, 36, 42, 48, 54].map((t) => <span key={t}>-{t}-</span>)}</Scale>
                <Scale $a="right">{["12", "6", "-0", "-6", "-12", "-18", "-24", "-30", "-36", "-42"].map((t) => <span key={t}>{t}</span>)}</Scale>
              </Scales>
              <Rms><span>RMS</span><span>-inf</span></Rms>
              <FaderSlot $r={2} $t={26}><Fader type="range" $h={239} min={0} max={100} defaultValue={73} aria-label="Master volume" /></FaderSlot>
            </MeterBox>
            <span>MASTER</span>
          </Master>
          <Strip>
            <StripBtn $bg="#8b8b8b" $c="#444" aria-label="Mono"><Svg s={12}><circle cx="6" cy="8" r="5" stroke="#444" /><circle cx="10" cy="8" r="5" stroke="#444" /></Svg></StripBtn>MONO
            <StripBtn $mt={3} $c="#d0444a">M</StripBtn><StripBtn $c="#d8d050">S</StripBtn>
            <StripBtn $mt={6} $bg="linear-gradient(105deg, #1c1c1c 15%, #17a584 20% 45%, #1c1c1c 48%, #ffe000 52% 75%, #1c1c1c 80%)" aria-label="Route" />ROUTE
            <StripBtn $mt={5} $bg="#4a4a4a">FX</StripBtn><StripBtn $bg="#8b8b8b" $c="#333" aria-label="Bypass"><Power /></StripBtn>
            <StripBtn $mt={5} $bg="#8b8b8b" $c="#333" aria-label="Trim"><Env /></StripBtn>TRIM
            <StripBtn $mt={3}>i</StripBtn>
          </Strip>
          <InputTrack>
            <InHead><InName>Input 1</InName><InPill>in<Tri /></InPill><InKnob><Knob /></InKnob></InHead>
            <InBody>
              <InFloat $x={63} $y={7}>-inf</InFloat>
              <FaderSlot $r={7} $t={14}><Fader type="range" $h={171} min={0} max={100} defaultValue={74} aria-label="Track volume" /></FaderSlot>
              <InFloat $x={66} $y={197}><Svg s={12}><path d="M1 5h4l5-4v14l-5-4H1z" fill="#888" /></Svg></InFloat>
              <InFloat $x={142} $y={194}><Disc $s={21} $bg={recBg} aria-label="Record arm"><Svg s={11}><circle cx="8" cy="8" r="6" stroke="#d99" strokeWidth="3" /></Svg></Disc></InFloat>
              <InFloat $x={75} $y={223} $f={12} $c="#ddd">Process</InFloat>
            </InBody>
            <InFoot>1</InFoot>
          </InputTrack>
        </Mixer>
      </DockLeft>
      <DockRight>
        <Round aria-label="Scroll right"><Tri r={-90} /></Round><ZoomBtn aria-label="Zoom in"><Plus /></ZoomBtn><ZoomBtn aria-label="Zoom out"><Minus /></ZoomBtn>
        <RateBox><span>AL<br />◉</span><DarkKnob /><span>Rate:<br />1.0</span></RateBox>
      </DockRight>
    </Dock>
    <Tabs>!<DockTab $on><BoxX />Mixer</DockTab><DockTab><BoxX />Performance</DockTab><DockTab><BoxX />Routing Matrix</DockTab></Tabs>
    <Bar>
      <TaskButtons /><Fill />
      <Tray>
        <Chev s={17} d="up" sw={1.3} />
        <Svg s={20}><rect x="2" y="0" width="12" height="16" rx="6" fill="#0a78e8" /><path d="M5 5l6 6-3 2.500v-11L11 5l-6 6" stroke="#fff" strokeWidth="1.200" /></Svg>
        <Svg s={20}><path d="M4 5h11v7H4z" fill="#fff" /><path d="M1 2v3h3V2M2.500 5v4H4M16 7v3" stroke="#fff" /></Svg>
        <Svg s={20}><path d="M1 6h2l3-3v10l-3-3H1zM8 6v4" stroke="#fff" /><path d="M10.500 4.500c1.500 2 1.500 5 0 7M13 3c2.500 3 2.500 7 0 10" stroke="#777" /></Svg>
        <Svg s={20}><circle cx="8" cy="8" r="7" stroke="#fff" /><ellipse cx="8" cy="8" rx="3" ry="7" stroke="#fff" /><path d="M1 6h14M1 10h14" stroke="#fff" /><circle cx="12.500" cy="12" r="3" fill="#101010" stroke="#fff" /><path d="M10.500 10l4 4" stroke="#fff" /></Svg>
        <Svg s={20}><path d="M1 3l14-2v13H1z" stroke="#fff" /><path d="M5 8a3 3 0 0 1 5-2M11 8a3 3 0 0 1-5 2" stroke="#fff" strokeWidth="1.300" /><circle cx="12.500" cy="12.500" r="3.500" fill="#f39a1e" /></Svg>
        <span>ENG</span><time>09:53</time>
        <Svg s={20}><path d="M0 1h16v12h-4l-2 3v-3H0z" fill="#fff" /><path d="M3 4.500h10M3 7.500h10M3 10.500h5" stroke="#101010" /></Svg>
        <DeskEdge />
      </Tray>
    </Bar>
  </>
);

/* ───────────── dialogs ───────────── */
const Win = styled.section`
  position: absolute; left: ${(p) => p.$x}px; top: ${(p) => p.$y}px; width: ${(p) => p.$w}px; height: ${(p) => p.$h}px; background: #f0f0f0;
  color: #111; font: 12px/16px ${MS}; box-shadow: 0 2px 12px rgba(0, 0, 0, 0.5); display: flex; flex-direction: column; overflow: hidden;
`;
const WinTitle = styled.header`
  display: flex; align-items: center; gap: 5px; height: ${(p) => p.$h}px; background: #fff; font: 13px/16px ${UI}; color: ${(p) => p.$c || "#8a8a8a"}; padding-left: ${(p) => p.$pl || 4}px; flex: none;
`;
const Btn = styled.button`
  height: 21px; width: ${(p) => p.$w}px; background: #e1e1e1; border: 1px solid #adadad; flex: none; text-align: center;
  &:disabled { background: #ccc; border-color: #bfbfbf; color: #838383; }
`;
const Field = styled.input`
  height: 22px; width: ${(p) => p.$w}px; border: 1px solid #7a7a7a; background: #fff; padding: 0 3px; text-align: ${(p) => p.$a || "left"};
  &:disabled { background: #f0f0f0; border-color: #ccc; color: #6d6d6d; }
`;
const Pick = styled.span`
  position: relative; display: block; width: ${(p) => p.$w}px; flex: none;
  select { appearance: none; width: 100%; height: 22px; border: 1px solid #adadad; background: #e1e1e1; padding: 0 3px; }
  svg { position: absolute; right: 4px; top: 6px; }
`;
const Select = ({ w, v, label }) => (<Pick $w={w}><select aria-label={label}><option>{v}</option></select><Chev c="#444" sw={1.3} /></Pick>);
const Check = styled.label`
  display: flex; align-items: center; gap: 3px; ${(p) => p.$dim && css`color: #838383;`}
  input { appearance: none; position: relative; width: 14px; height: 14px; border: 1px solid ${(p) => (p.$dim ? "#ccc" : "#333")}; background: #fff; flex: none; }
  input:checked::after { content: ""; position: absolute; left: 4px; top: 1px; width: 4px; height: 8px; border: solid #222; border-width: 0 1px 1px 0; transform: rotate(40deg); }
`;
const Group = styled.fieldset`
  border: 1px solid #dcdcdc; padding: ${(p) => p.$p}; height: ${(p) => p.$h}px; margin-top: ${(p) => p.$mt}px; display: flex; flex-direction: column; gap: ${(p) => p.$g || 0}px; flex: none;
  legend { height: 16px; padding: 0 2px; margin-left: ${(p) => p.$lx || 6}px; }
`;
const Row = styled.div`
  display: flex; align-items: center; height: ${(p) => p.$h || 21}px; margin-top: ${(p) => p.$mt || 0}px; gap: ${(p) => p.$g || 0}px; padding-left: ${(p) => p.$l || 0}px; flex: none;
`;
const Lab = styled.label`width: ${(p) => p.$w}px; flex: none; ${(p) => p.$dim && css`color: #9a9a9a;`}`;
const RtfBody = styled.div`padding: 13px 13px 0;`;
const Push = styled.div`margin-left: auto; display: flex; flex: none; width: ${(p) => p.$w}px;`;

const RenderToFile = () => (
  <Win $x={718} $y={208} $w={615} $h={764}>
    <WinTitle $h={29}><ReaperLogo s={18} />Render to File<Fill /><WinBtn $w={40} aria-label="Close"><XI c="#777" /></WinBtn></WinTitle>
    <RtfBody>
      <Row><Lab $w={51}>Source:</Lab><Select w={219} v="Master mix" label="Source" /><Gap $w={8} /><Lab $w={56}>Bounds:</Lab><Select w={174} v="Entire project" label="Bounds" /><Gap $w={7} /><Btn $w={73}>Presets</Btn></Row>
      <Group $mt={6} $h={52} $p="8px 8px 0">
        <legend>Time bounds</legend>
        <Row $h={22}>
          <Lab $w={38} $dim htmlFor="st">Start:</Lab><Field id="st" disabled $w={73} defaultValue="0:00.000" /><Gap $w={8} />
          <Lab $w={36} $dim htmlFor="en">End:</Lab><Field id="en" disabled $w={76} defaultValue="0:30.000" /><Gap $w={7} />
          <Lab $w={50} $dim htmlFor="le">Length:</Lab><Field id="le" disabled $w={73} defaultValue="0:30.000" /><Gap $w={63} />
          <Check><input type="checkbox" />Tail:</Check><Fill /><Field $w={56} disabled defaultValue="1000" aria-label="Tail ms" /><Gap $w={9} /><Lab $w={28}>ms</Lab>
        </Row>
      </Group>
      <Group $mt={5} $h={108} $p="4px 12px 0 14px" $g={7} $lx={-2}>
        <legend>Output</legend>
        <Row $h={22}><Lab $w={65} htmlFor="dir">Directory:</Lab><Field id="dir" $w={411} defaultValue="s\cimil\Develop\SPARTA\MEASURES\PAPER_PERF\Media\output\64spl" /><Gap $w={6} /><Btn $w={79}>Browse...</Btn></Row>
        <Row $h={22}><Lab $w={65} htmlFor="fn">File name:</Lab><Field id="fn" $w={411} /><Gap $w={6} /><Btn $w={79}>Wildcards</Btn></Row>
        <Row $h={22}><Lab $w={65} htmlFor="rt">Render to:</Lab><Field id="rt" $a="right" $w={411} readOnly defaultValue="2025-01-17 09_52_24.wav" /><Gap $w={6} /><Btn $w={79} disabled>1 file</Btn></Row>
      </Group>
      <Group $mt={3} $h={222} $p="4px 11px 0 0">
        <legend>Options</legend>
        <Row><Push $w={0} /><Select w={100} v="" label="Channels" /><Gap $w={46} /><Select w={155} v="Full-speed Offline" label="Speed" /></Row>
        <Row $h={37} $l={372}><Check><input type="checkbox" />2nd pass render</Check></Row>
        <Row><Push $w={0} /><Select w={120} v="" label="Resample mode" /><Gap $w={12} /><Btn $w={154}>Normalize/Limit/Fade</Btn></Row>
        <Row $h={20} $mt={7} $l={294}><Check><input type="checkbox" />Dither master</Check><Push $w={135}><Check $dim><input type="checkbox" disabled />Dither stems</Check></Push></Row>
        <Row $h={20} $l={294}><Check><input type="checkbox" />Noise shape master</Check><Push $w={135}><Check $dim><input type="checkbox" disabled />Noise shape stems</Check></Push></Row>
        <Row $h={19} $mt={5} $l={351}><Check $dim><input type="checkbox" disabled />Embed stretch markers</Check></Row>
        <Row $h={19} $l={351}><Check $dim><input type="checkbox" disabled />Embed take markers</Check></Row>
        <Row $mt={5} $l={337}><Check><input type="checkbox" />Add new metadata</Check><Push $w={86}><Btn $w={86} disabled>Metadata...</Btn></Push></Row>
      </Group>
      <Group as="div" $mt={27} $h={130} $p="10px 0 0 300px" $g={8}>
        <Row $l={39}><Select w={116} v="" label="Format" /></Row>
        <Row $l={39}><Select w={150} v="Auto WAV/RF64" label="Large files" /></Row>
        <Row $l={17}>Include BWF data</Row><Row $l={17}>Embed tempo</Row>
      </Group>
      <Row $mt={11} $l={311}><Check><input type="checkbox" />Add rendered items to new tracks in project</Check></Row>
      <Row $l={311}><Check><input type="checkbox" />Save copy of project to outfile.wav.RPP</Check></Row>
      <Row $l={311}><Check><input type="checkbox" />Save outfile.render_stats.html</Check></Row>
      <Row $mt={8} $h={23}><Push $w={300}><Btn $w={145}>Dry run (no output)</Btn><Gap $w={10} /><Btn $w={145}>Render 1 file</Btn></Push></Row>
      <Row $mt={10} $h={23}><Push $w={194}><Btn $w={77}>Cancel</Btn><Gap $w={9} /><Btn $w={108} disabled>Save Settings</Btn></Push></Row>
    </RtfBody>
  </Win>
);

const ParamBody = styled.div`padding: 13px 0 0 15px; display: grid; gap: 8px;`;
const Pill = styled.i`display: block; width: 200px; height: 22px; border-radius: 11px; background: linear-gradient(#555, #555) 10px 8px / 180px 4px no-repeat #c8c8c8;`;
const ParamWindow = () => (
  <Win $x={670} $y={302} $w={300} $h={200}>
    <WinTitle $h={29} $pl={3}>Parameter modulation</WinTitle>
    <ParamBody><Check><input type="checkbox" defaultChecked />Enable</Check><Pill /></ParamBody>
  </Win>
);

const Progress = styled.progress`
  appearance: none; display: block; width: 741px; height: 15px; border: 1px solid #bcbcbc; margin-left: 18px;
  &::-webkit-progress-bar { background: #e6e6e6; } &::-webkit-progress-value { background: linear-gradient(90deg, #06b025 70%, #4cd35a); }
`;
const SelInput = styled.input`
  display: block; width: 756px; height: 22px; border: 1px solid #1a6fb8; margin-left: 5px; padding: 0 2px; background: #f0f0f0;
  &::selection { background: #0078d7; color: #fff; }
`;
const Center = styled.div`text-align: center; height: 16px; white-space: pre; margin-right: 11px; margin-top: ${(p) => p.$mt}px;`;
const MeterRow = styled.div`display: flex; align-items: center; justify-content: flex-end; gap: 7px; margin: 10px 2px 0 0;`;
const Meters = styled.div`
  display: grid; grid-auto-rows: 1fr; width: 605px; height: 585px; color: #fff; font-size: 11px; line-height: 9px; overflow: hidden;
  background: linear-gradient(90deg, #00c0bf 0, #00ccb8 180px, #00d6b0 300px, #00e6a4 390px, #00ff93 470px, #00ff93 calc(100% - 54px), #bb2800 calc(100% - 54px));
`;
const Meter = styled.div`
  display: grid; grid-template-columns: repeat(10, 1fr) 70px; span { padding-left: 10px; text-shadow: 1px 1px #000; } b { font-weight: 400; text-align: right; padding-right: 4px; }
`;
const DialogBody = styled.div`padding: 12px 13px 0;`;
const Actions = styled.div`display: grid; justify-content: end; gap: 7px; margin-top: 21px; button { height: 23px; }`;
const Grip = styled.i`position: absolute; right: 1px; bottom: 1px; width: 9px; height: 9px; background: radial-gradient(#aaa 1px, transparent 1px) 0 0 / 3px 3px; clip-path: polygon(100% 0, 100% 100%, 0 100%);`;
const peaks = "6.1 6.3 6.7 7.3 6.4 7.5 5.7 6.5 7.1 5.9 6.8 7.0 7.9 6.1 6.5 6.7 8.8 6.7 7.0 6.8 7.0 7.3 6.3 7.7 5.9 7.3 7.2 6.7 6.1 5.8 6.9 7.5 7.8 7.2 7.8 6.8 7.6 6.6 7.2 7.8 7.0 7.0 6.4 6.1 6.0 7.1 6.4 6.5 6.6 8.0 7.1 6.8 6.9 7.1 6.5 7.6 6.7 7.5 7.6 6.6 6.9 6.4 8.0 7.2".split(" ");
const steps = [60, 54, 48, 42, 36, 30, 24, 18, 12, 6];

const RenderingDialog = () => {
  const out = useRef(null);
  useEffect(() => { out.current.focus(); out.current.select(); }, []);
  return (
    <Win $x={290} $y={388} $w={814} $h={890}>
      <WinTitle $h={34} $c="#111" $pl={8}><ReaperLogo s={19} />Rendering to file...<Fill />
        <WinBtn $w={49} aria-label="Minimize"><MinI c="#111" /></WinBtn><WinBtn aria-label="Maximize" disabled><MaxI c="#bbb" /></WinBtn><WinBtn aria-label="Close"><XI c="#111" /></WinBtn>
      </WinTitle>
      <DialogBody>
        <Group $mt={0} $h={78} $p="5px 5px 0" $lx={1}>
          <legend>Output file</legend>
          <SelInput ref={out} readOnly defaultValue="Dry run, no output" aria-label="Output file" />
          <Center $mt={5}>Dry run: 48000Hz, 64ch</Center>
        </Group>
        <Group $mt={10} $h={672} $p="8px 5px 0" $lx={1}>
          <legend>Render status</legend>
          <Progress value={13} max={100} />
          <Center $mt={10}>{"Complete: 13%   Elapsed: 0:39   Remaining: 4:34   (0.1x realtime)"}</Center>
          <MeterRow>Master mix
            <Meters>{peaks.map((p, i) => <Meter key={i}>{steps.map((s) => <span key={s}>-{s}</span>)}<b>+{p}</b></Meter>)}</Meters>
          </MeterRow>
        </Group>
        <Actions><Btn $w={115}>Stats/Charts</Btn><Btn $w={115}>Cancel</Btn></Actions>
      </DialogBody>
      <Grip />
    </Win>
  );
};

/* ───────────── FX plug-in window ───────────── */
const FxTop = styled.div`height: 55px; background: #fff; display: flex; justify-content: flex-end; align-items: flex-start; padding-top: 7px; gap: 36px; flex: none;`;
const FxClose = styled.i`width: 23px; height: 23px; background: #ececec;`;
const FxRow = styled.div`display: flex; align-items: center; height: ${(p) => p.$h}px; padding: 0 ${(p) => p.$r}px 0 4px; gap: 5px; flex: none; ${Pick} { flex: 1; margin-right: 2px; }`;
const Plugin = styled.div`
  flex: 1; margin: 0 3px 3px 340px; border: 3px solid #a9b6bc; border-width: 3px 2px 2px; color: #fff; font: 14px/18px ${VD};
  background: linear-gradient(#16303e 35px, #10242a 120px, #031012 240px, #020f10 400px, #17303f 530px); display: flex; flex-direction: column;
`;
const PHead = styled.div`
  display: flex; align-items: center; height: 35px; border-bottom: 2px solid #97a6ad; background: linear-gradient(90deg, #0a1818 10%, #163040 45%); font-size: 11px; padding-left: 20px; white-space: pre; flex: none;
  strong { font-size: 17px; width: 237px; text-align: right; margin-right: 16px; } em { font-style: normal; background: linear-gradient(90deg, #7d12d8, #8f1cff); -webkit-background-clip: text; color: transparent; }
  small { font-size: 10px; margin: 9px 0 0 18px; }
`;
const PBody = styled.div`flex: 1; display: grid; grid-template-columns: 448px 1fr; column-gap: 9px; padding: 0 11px 7px 6px;`;
const PCol = styled.div`display: flex; flex-direction: column; min-width: 0; font-weight: 700;`;
const PTitle = styled.div`height: ${(p) => p.$h}px; line-height: ${(p) => p.$lh || p.$h}px; padding-right: ${(p) => p.$r || 0}px; text-align: right; small { font-size: 10px; font-weight: 400; margin-left: 9px; }`;
const Panel = styled.div`position: relative; height: ${(p) => p.$h}px; margin-bottom: ${(p) => p.$mb || 0}px; border: 1px solid #46575c; border-width: 2px 1px 1px; background: rgba(30, 50, 54, 0.35); flex: none;`;
const PGrid = styled.div`display: grid; grid-template-columns: 145px 68px 9px 149px 68px; grid-auto-rows: 22px; row-gap: 3px; padding-top: 6px; align-items: center;`;
const PLab = styled.label`text-align: right; padding-right: ${(p) => p.$e || 0}px; ${(p) => p.$left && css`text-align: left;`}`;
const PIn = styled.input`width: ${(p) => p.$w || 68}px; height: 22px; border: 1px solid #46575c; background: ${(p) => p.$bg || "transparent"}; padding: 0 5px; font-weight: 400; text-align: ${(p) => p.$a || "left"}; color: ${(p) => p.$c || "#fff"};`;
const PPick = styled.span`
  position: relative; display: block; width: ${(p) => p.$w}px; line-height: 16px;
  select { appearance: none; display: block; width: 100%; height: ${(p) => p.$h || 22}px; border: 1px solid #8b989c; border-radius: 4px; background: #22343a; padding: 0 6px; font-size: 12px; font-weight: 400; color: ${(p) => p.$c || "#fff"}; ${(p) => p.$end && css`text-align-last: right; padding-right: 44px; border-radius: 3px 0 0 3px; font-size: 11px;`} }
  svg { position: absolute; right: 5px; top: ${(p) => (p.$h ? 3 : 5)}px; } ${(p) => p.$end && css`svg { right: 16px; }`}
`;
const PathRow = styled.div`display: flex; padding: 3px 4px 0 0;`;
const Dots = styled.button`width: 35px; height: 22px; border: 1px solid #aab; border-radius: 0 9px 9px 0; font-size: 11px;`;
const SubPanel = styled.i`position: absolute; left: 217px; right: 0; bottom: 0; height: 56px; border: solid #46575c; border-width: 2px 0 0 1px; pointer-events: none;`;
const Cells = styled.div`display: grid; grid-template-columns: repeat(3, 56px); column-gap: 8px; padding-left: 96px; text-align: center; line-height: 22px; `;
const P4 = styled.div`display: grid; grid-template-columns: 286px 80px 80px; text-align: center; height: 100%;`;
const P4Cell = styled.div`line-height: 24px; border-left: 1px solid #46575c; font-size: 13px;`;
const TimeRow = styled.div`display: grid; grid-template-columns: 182px 193px; column-gap: 4px; height: 26px; align-items: center;`;
const P6 = styled.div`display: grid; grid-template-columns: 200px 1fr; height: 100%; > div + div { border-left: 1px solid #46575c; }`;
const RotNote = styled.p`margin: 12px 0 0; font-size: 12px; line-height: 18px; text-align: right; padding-right: 16px;`;
const RotHead = styled.div`text-align: right; padding: 8px 33px 6px 0;`;
const RotCheck = styled.div`padding-left: 90px;`;
const Knobs = styled.div`display: grid; grid-template-columns: repeat(3, 66px); column-gap: 6px; padding: 7px 0 0 20px; justify-items: center; font-size: 11px; i { font-style: normal; font-weight: 400; font-size: 10px; }`;
const KnobCell = styled.div`display: flex; flex-direction: column; align-items: center; svg { margin: 1px 0 6px; } input { height: 17px; font-size: 13px; }`;
const Flip = styled.label`display: flex; align-items: center; gap: 4px; margin-top: 7px; line-height: 18px; font-size: 13px; input { appearance: none; width: 16px; height: 17px; border-radius: 50%; border: 1px solid #77858a; background: #26383e; }`;
const Dial = () => (
  <Svg w={56} h={54} vb="0 0 56 54"><ellipse cx="28" cy="27" rx="27" ry="26" stroke="#c0c4c4" strokeWidth="1.500" /><path d="M28 27V1C12 1 1 12 1 27c0 12 5 20 11 24z" fill="#b8bcbc" /><path d="M28 27l16 22" stroke="#c0c4c4" strokeWidth="1.500" /></Svg>
);
const ViewTop = styled.div`display: flex; align-items: center; justify-content: space-between; height: 29px; padding-left: 164px; line-height: 38px;`;
const View = styled.div`height: 495px; border: 1px solid #46575c; background: linear-gradient(#172c33, #142428 15%, #132226 74%, #1f323c 86%, #223a49); svg { margin: 12px 0 0 11px; }`;

const FxWindow = () => (
  <Win $x={900} $y={298} $w={1323} $h={688}>
    <FxTop><Svg s={15}><path d="M5 1h6M6 1v6l-2 3h8l-2-3V1M8 10v6" stroke="#777" /></Svg><FxClose /></FxTop>
    <FxRow $h={31} $r={3}><Field $w={1286} aria-label="Comment" /><Fill /><Btn $w={22}>...</Btn></FxRow>
    <FxRow $h={29} $r={13}>
      <Select v="" label="Preset" /><Btn $w={20}>+</Btn><Btn $w={54}>Param</Btn><Btn $w={90}>64 in+out</Btn><Btn $w={29}>UI</Btn><Knob /><Check><input type="checkbox" defaultChecked aria-label="Enabled" /></Check>
    </FxRow>
    <Plugin>
      <PHead><strong>SPARTA|<em>MCFX-6DoFconv</em></strong><span>6DoF Convolver with the MCFX convolution engine</span><small>Ver 1.0.0alpha, Build Date Nov 21 2024 17:26:29</small></PHead>
      <PBody>
        <PCol>
          <PTitle $h={29} $lh={38} $r={217}>Dataset<small>SOFA file loaded</small></PTitle>
          <Panel $h={30}><PathRow>
            <PPick $w={407} $end><select aria-label="Dataset path"><option>farina-proj\MATRICES(hrtf-and-SOFA)\SOFA\creat...</option></select><Chev s={13} sw={2.5} /></PPick><Dots>...</Dots>
          </PathRow></Panel>
          <Panel $h={141} $mb={5}>
            <SubPanel />
            <PGrid>
              <PLab $e={9}>Block Size:</PLab><PIn defaultValue="64" aria-label="Block Size" /><i /><PLab $left>IR Length [s]:</PLab><PIn defaultValue="10" aria-label="IR Length" />
              <PLab $e={6}>Positions:</PLab><PIn defaultValue="3" aria-label="Positions" /><i /><PLab $left>Filter Samplerate:</PLab><PIn defaultValue="48000" aria-label="Filter Samplerate" />
              <PLab $e={27}>IRs/pos:</PLab><PIn defaultValue="64" aria-label="IRs" /><i /><PLab $left>Host Samplerate:</PLab><PIn defaultValue="48000" aria-label="Host Samplerate" />
              <PLab $e={48}>Inputs:</PLab><PIn defaultValue="1" aria-label="Inputs" /><i /><PLab $left>1st Partition Size:</PLab><PPick $w={68}><select aria-label="First partition size"><option>64</option></select><Chev s={12} /></PPick>
              <PLab $e={37}>Outputs:</PLab><PIn defaultValue="64" aria-label="Outputs" /><i /><PLab $left>Max Partition Size:</PLab><PPick $w={68} $c="#4c595c"><select aria-label="Max partition size"><option>8192</option></select><Chev s={12} /></PPick>
            </PGrid>
          </Panel>
          <Panel $h={50}><Cells>
            <span>x</span><span>y</span><span>z</span>
            <PIn $w={56} $a="center" $c="#a5b0b2" $bg="#213238" defaultValue="1.5" aria-label="Source x" /><PIn $w={56} $a="center" $c="#a5b0b2" $bg="#213238" defaultValue="-1.0" aria-label="Source y" /><PIn $w={56} $a="center" $c="#a5b0b2" $bg="#213238" defaultValue="1.6" aria-label="Source z" />
          </Cells></Panel>
          <PTitle $h={25} $lh={29} $r={110}>Target Listener Position [m]</PTitle>
          <Panel $h={55} $mb={6}><P4>
            <Cells>
              <span>x</span><span>y</span><span>z</span>
              <PIn $w={56} $a="center" $c="#8a979a" $bg="#213238" defaultValue="0.000" aria-label="x" /><PIn $w={56} $a="center" $bg="linear-gradient(#14242a 70%, #1f4d63)" defaultValue="-1.783" aria-label="y" /><PIn $w={56} $a="center" $c="#8a979a" $bg="#46585e" defaultValue="1.000" aria-label="z" />
            </Cells>
            <P4Cell>Index<br /><PIn $w={54} defaultValue="0" aria-label="Index" /></P4Cell><P4Cell>OSC Port<br /><PIn $w={50} defaultValue="9000" aria-label="OSC port" /></P4Cell>
          </P4></Panel>
          <Panel $h={29}><TimeRow><PLab htmlFor="xt">Crossfade Time [ms]:</PLab><PIn id="xt" $w={193} $a="center" $c="#8a979a" defaultValue="1.3" /></TimeRow></Panel>
          <PTitle $h={21} $lh={23} $r={55}>Ambisonic Sound-Field Rotation [degrees]</PTitle>
          <Panel $h={132}><P6>
            <div>
              <RotHead>Enable Rotation</RotHead>
              <RotCheck><Svg s={22}><circle cx="8" cy="9" r="6" fill="#2c3c40" stroke="#77858a" /><path d="M5.500 8l2.500 4L12 2" stroke="#fff" strokeWidth="1.800" /></Svg></RotCheck>
              <RotNote>Note that this rotation is<br />only usable if you have<br />(Ambisonic IRs)</RotNote>
            </div>
            <Knobs>
              {["Yaw", "Pitch", "Roll"].map((k, i) => (
                <KnobCell key={k}><span>{k}<i>{(i === 0 ? " " : "") + `/ypr[${i}]`}</i></span><Dial /><PIn $w={66} $a="center" defaultValue="0.00" aria-label={k} /><Flip>+/-<input type="checkbox" /></Flip></KnobCell>
              ))}
            </Knobs>
          </P6></Panel>
        </PCol>
        <PCol>
          <ViewTop><span>Coordinate View [m]</span><PPick $w={105} $h={19}><select aria-label="View"><option>Side View</option></select><Chev s={13} sw={2.5} /></PPick></ViewTop>
          <View>
            <Svg w={400} h={90} vb="0 0 400 90">
              <rect x="1" y="1" width="350" height="42" fill="#122226" />
              {Array.from({ length: 14 }, (_, i) => <path key={i} d={`M${1 + (i + 1) * 23.4} 1v41`} stroke={i % 5 === 4 ? "#5d6b6f" : "#2d3d42"} />)}
              <path d="M1 21h350" stroke="#2d3d42" />
              <rect x="1" y="1" width="350" height="42" stroke="#d0d4d4" strokeWidth="2" />
              <circle cx="35" cy="26" r="7" fill="#15494c" stroke="#2f6a6c" /><circle cx="210" cy="26" r="9" fill="#0a8a0a" stroke="#8fc98f" />
              <circle cx="269" cy="20" r="6" fill="#ff10ff" stroke="#ffb0ff" /><circle cx="298" cy="55" r="6" fill="#ffa010" stroke="#ffd9a0" /><circle cx="386" cy="26" r="7" fill="#15494c" stroke="#2f6a6c" />
              <g fontSize="12" fill="#98a4a7" textAnchor="middle" fontWeight="400">
                <text x="7" y="59">3.6</text><text x="123" y="59">1.6</text><text x="239" y="59">-0.4</text><text x="357" y="59">-2.4</text><text x="368" y="47">1.2</text><text x="192" y="75">Y</text><text x="385" y="27" fill="#9fc">Z</text><text x="221" y="19" fill="#fff">1</text>
              </g>
            </Svg>
          </View>
        </PCol>
      </PBody>
    </Plugin>
  </Win>
);

export default function App() {
  return (
    <>
      <Global />
      <Screen>
        <LeftMonitor>
          <ExplorerWindow />
          <Bar><TaskButtons /><Fill /><Clock>09:53</Clock></Bar>
        </LeftMonitor>
        <RightMonitor>
          <DawWindow />
          <FxWindow />
          <ParamWindow />
          <RenderToFile />
          <RenderingDialog />
        </RightMonitor>
      </Screen>
    </>
  );
}
